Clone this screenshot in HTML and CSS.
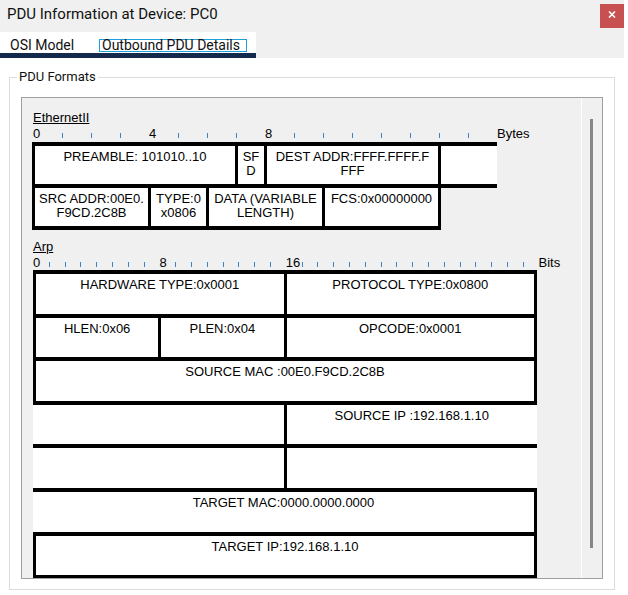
FILE: index.html
```html
<!DOCTYPE html>
<html>
<head>
<meta charset="utf-8">
<title>PDU Information at Device: PC0</title>
<link rel="stylesheet" href="styles.css">
</head>
<body>
<div class="window">
  <div class="titlebar">
    <span class="title">PDU Information at Device: PC0</span>
    <button class="close" aria-label="Close"><svg width="8" height="7" viewBox="0 0 8 7"><path d="M1 0.5 L7 6.5 M7 0.5 L1 6.5" stroke="#fff" stroke-width="1.6" fill="none"/></svg></button>
  </div>
  <div class="tabrow">
    <div class="tabs">
      <span class="tab tab-osi">OSI Model</span>
      <span class="tab tab-out">Outbound PDU Details</span>
    </div>
  </div>
  <div class="content">
    <fieldset class="group">
      <legend>PDU Formats</legend>
      <div class="panel">
        <div class="scroll-content">
          <div class="proto-name">EthernetII</div>
          <div class="ruler ruler-bytes">
            <span class="rc">0</span><span class="rc"><i class="tick"></i></span><span class="rc"><i class="tick"></i></span><span class="rc"><i class="tick"></i></span><span class="rc">4</span><span class="rc"><i class="tick"></i></span><span class="rc"><i class="tick"></i></span><span class="rc"><i class="tick"></i></span><span class="rc">8</span><span class="rc"><i class="tick"></i></span><span class="rc"><i class="tick"></i></span><span class="rc"><i class="tick"></i></span><span class="rc"><i class="tick"></i></span><span class="rc"><i class="tick"></i></span><span class="rc"><i class="tick"></i></span><span class="rc"><i class="tick"></i></span><span class="unit">Bytes</span>
          </div>
          <div class="frame frame-eth">
            <div class="cell s7">PREAMBLE: 101010..10</div>
            <div class="cell s1">SF<br>D</div>
            <div class="cell s6">DEST ADDR:FFFF.FFFF.F<br>FFF</div>
            <div class="cell s2 nr tail"></div>
            <div class="cell s4">SRC ADDR:00E0.<br>F9CD.2C8B</div>
            <div class="cell s2">TYPE:0<br>x0806</div>
            <div class="cell s4">DATA (VARIABLE<br>LENGTH)</div>
            <div class="cell s4">FCS:0x00000000</div>
          </div>

          <div class="proto-name arp-name">Arp</div>
          <div class="ruler ruler-bits">
            <span class="rc">0</span><span class="rc"><i class="tick"></i></span><span class="rc"><i class="tick"></i></span><span class="rc"><i class="tick"></i></span><span class="rc"><i class="tick"></i></span><span class="rc"><i class="tick"></i></span><span class="rc"><i class="tick"></i></span><span class="rc"><i class="tick"></i></span><span class="rc">8</span><span class="rc"><i class="tick"></i></span><span class="rc"><i class="tick"></i></span><span class="rc"><i class="tick"></i></span><span class="rc"><i class="tick"></i></span><span class="rc"><i class="tick"></i></span><span class="rc"><i class="tick"></i></span><span class="rc"><i class="tick"></i></span><span class="rc">16</span><span class="rc"><i class="tick"></i></span><span class="rc"><i class="tick"></i></span><span class="rc"><i class="tick"></i></span><span class="rc"><i class="tick"></i></span><span class="rc"><i class="tick"></i></span><span class="rc"><i class="tick"></i></span><span class="rc"><i class="tick"></i></span><span class="rc"><i class="tick"></i></span><span class="rc"><i class="tick"></i></span><span class="rc"><i class="tick"></i></span><span class="rc"><i class="tick"></i></span><span class="rc"><i class="tick"></i></span><span class="rc"><i class="tick"></i></span><span class="rc"><i class="tick"></i></span><span class="rc"><i class="tick"></i></span><span class="unit">Bits</span>
          </div>
          <div class="frame frame-arp">
            <div class="cell s16">HARDWARE TYPE:0x0001</div>
            <div class="cell s16">PROTOCOL TYPE:0x0800</div>
            <div class="cell s8">HLEN:0x06</div>
            <div class="cell s8">PLEN:0x04</div>
            <div class="cell s16">OPCODE:0x0001</div>
            <div class="cell s32">SOURCE MAC :00E0.F9CD.2C8B</div>
            <div class="cell s16 nl"></div>
            <div class="cell s16 nr">SOURCE IP :192.168.1.10</div>
            <div class="cell s16 nl"></div>
            <div class="cell s16 nr"></div>
            <div class="cell s32 nl">TARGET MAC:0000.0000.0000</div>
            <div class="cell s32">TARGET IP:192.168.1.10</div>
          </div>
        </div>
        <div class="vscroll"><div class="thumb"></div></div>
      </div>
    </fieldset>
  </div>
</div>
</body>
</html>
```
FILE: styles.css
```css
* { box-sizing: border-box; }
html, body { margin: 0; padding: 0; background: #fff; }
body {
  width: 628px;
  height: 595px;
  overflow: hidden;
  font-family: Roboto, "Noto Sans", sans-serif;
  color: #000;
}
.window { width: 624px; height: 595px; background: #fff; }

/* title bar */
.titlebar {
  height: 32px;
  background: #f0f0f0;
  display: flex;
  justify-content: space-between;
  align-items: flex-start;
}
.title { font-size: 15px; line-height: 28px; padding-left: 7px; color: #111; }
.close {
  width: 24px;
  height: 24px;
  margin-top: 4px;
  padding: 0 0 3px 0;
  border: 0;
  background: #c75050;
  display: flex;
  align-items: center;
  justify-content: center;
}

/* tabs */
.tabrow { height: 26px; background: #f0f0f0; }
.tabs {
  width: 256px;
  height: 26px;
  background: #fff;
  border-bottom: 5px solid #132a4c;
  display: flex;
  align-items: flex-start;
  padding: 7px 0 0 7px;
}
.tab {
  height: 13px;
  line-height: 11px;
  font-size: 14px;
  border: 1px solid transparent;
  padding: 0 2px;
  white-space: nowrap;
  color: #111;
}
.tab-osi { width: 92px; }
.tab-out { width: 148px; border-color: #1ea1db; }

/* group box */
.content { padding: 11px 9px 0; }
.group {
  margin: 0;
  padding: 0 0 10px 0;
  border: 1px solid #dcdcdc;
  min-width: 0;
}
.group legend {
  margin-left: 7px;
  padding: 0 2px;
  font-size: 13px;
  line-height: 16px;
  color: #111;
}
.panel {
  margin: 12px 11px 0;
  height: 482px;
  border: 1px solid #a0a0a0;
  background: #f0f0f0;
  display: flex;
  overflow: hidden;
}
.scroll-content {
  flex: 1;
  padding: 12px 0 0 11px;
  overflow: hidden;
  font-family: "Liberation Sans", Arial, sans-serif;
  font-size: 13px;
}
.vscroll {
  width: 21px;
  flex: none;
  border-left: 1px solid #fff;
  padding-left: 8px;
}
.thumb {
  width: 3px;
  height: 429px;
  margin-top: 21px;
  background: #868686;
}

/* protocol diagrams */
.proto-name {
  line-height: 16px;
  text-decoration: underline;
}
.arp-name { margin-top: 9px; }
.ruler {
  display: flex;
  height: 15px;
  line-height: 15px;
  white-space: nowrap;
}
.rc { flex: none; }
.ruler-bytes .rc { width: 29px; }
.ruler-bits .rc { width: 15.8px; }
.tick {
  display: inline-block;
  width: 1px;
  height: 5px;
  background: #4181c8;
  vertical-align: baseline;
}
.unit { flex: none; }

.frame {
  display: grid;
  padding: 4px 0 0 3px;
  justify-content: start;
}
.frame-eth {
  margin: 1px 0 0 -1px;
  grid-template-columns: repeat(16, 29px);
  grid-auto-rows: 42px;
}
.frame-arp {
  grid-template-columns: repeat(32, 15.67px);
  grid-auto-rows: 43.6px;
}
.cell {
  margin: -4px 0 0 -3px;
  border-style: solid;
  border-color: #000;
  border-width: 4px 3px;
  background: #fff;
  text-align: center;
  padding-top: 4px;
  line-height: 14px;
  white-space: nowrap;
}
.s1 { grid-column: span 1; }
.s2 { grid-column: span 2; }
.s4 { grid-column: span 4; }
.s6 { grid-column: span 6; }
.s7 { grid-column: span 7; }
.s8 { grid-column: span 8; }
.s16 { grid-column: span 16; }
.s32 { grid-column: span 32; }
.nl { border-left-width: 0; }
.nr { border-right-width: 0; }
.tail { margin-right: 2px; }
```
